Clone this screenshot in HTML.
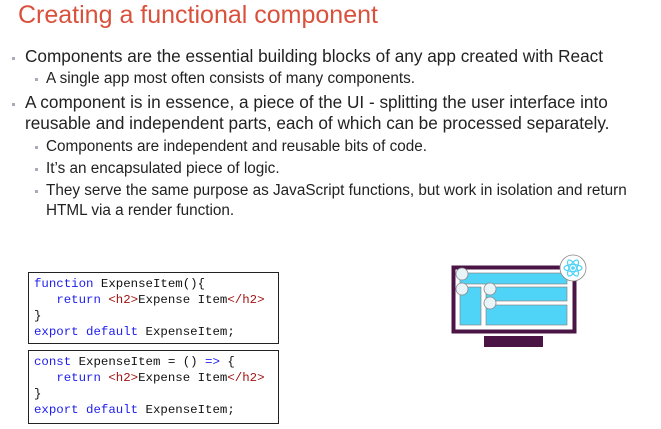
<!DOCTYPE html>
<html><head><style>
body{margin:0;width:661px;height:429px;background:#fff;position:relative;overflow:hidden;font-family:"Liberation Sans",Arial,sans-serif;color:#222}
.a{position:absolute;white-space:nowrap}
.t{left:18px;top:1px;font-size:25px;color:#d9513c}
.b1{font-size:17.2px;left:25px}
.b2{font-size:15.3px;left:46px}
.d1{position:absolute;left:12px;width:3px;height:3px;background:#aab}
.d2{position:absolute;left:35px;width:3px;height:3px;background:#aab}
.code{position:absolute;left:28px;width:251px;border:1px solid #222;font-family:"Liberation Mono",monospace;font-size:12.4px;line-height:16px;padding:3px 5px;box-sizing:border-box;color:#111}
.k{color:#2020ee}.r{color:#a31515}
</style></head><body>
<div class="a t">Creating a functional component</div>
<div class="d1" style="top:57px"></div><div class="a b1" style="top:46px">Components are the essential building blocks of any app created with React</div>
<div class="d2" style="top:78px"></div><div class="a b2" style="top:70px">A single app most often consists of many components.</div>
<div class="d1" style="top:103px"></div><div class="a b1" style="top:92px">A component is in essence, a piece of the UI - splitting the user interface into</div>
<div class="a b1" style="top:113px">reusable and independent parts, each of which can be processed separately.</div>
<div class="d2" style="top:146px"></div><div class="a b2" style="top:138px">Components are independent and reusable bits of code.</div>
<div class="d2" style="top:168px"></div><div class="a b2" style="top:160px">It’s an encapsulated piece of logic.</div>
<div class="d2" style="top:190px"></div><div class="a b2" style="top:182px">They serve the same purpose as JavaScript functions, but work in isolation and return</div>
<div class="a b2" style="top:202px">HTML via a render function.</div>
<div class="code" style="top:272px;height:72px"><span class="k">function</span> ExpenseItem(){<br>&nbsp;&nbsp;&nbsp;<span class="k">return</span> <span class="r">&lt;h2&gt;</span>Expense Item<span class="r">&lt;/h2&gt;</span><br>}<br><span class="k">export default</span> ExpenseItem;</div>
<div class="code" style="top:350px;height:74px"><span class="k">const</span> ExpenseItem = () <span class="k">=&gt;</span> {<br>&nbsp;&nbsp;&nbsp;<span class="k">return</span> <span class="r">&lt;h2&gt;</span>Expense Item<span class="r">&lt;/h2&gt;</span><br>}<br><span class="k">export default</span> ExpenseItem;</div>
<svg style="position:absolute;left:0;top:0" width="661" height="429">
<rect x="453.5" y="267.5" width="121" height="64" fill="#fff" stroke="#4a1545" stroke-width="4"/>
<rect x="484" y="336" width="59" height="11" fill="#4a1545"/>
<g fill="#4fd3f7" stroke="#888" stroke-width="0.7">
<rect x="460" y="273" width="107" height="11"/>
<rect x="460" y="287" width="21" height="38"/>
<rect x="486" y="287" width="81" height="14"/>
<rect x="486" y="305" width="81" height="20"/>
</g>
<g fill="#e8f4f8" stroke="#888" stroke-width="0.8">
<circle cx="462" cy="274" r="6"/><circle cx="462" cy="289" r="6"/><circle cx="490" cy="289" r="6"/><circle cx="490" cy="303" r="6"/>
<circle cx="573" cy="268" r="13" fill="#fff"/>
</g>
<g fill="none" stroke="#4fd3f7" stroke-width="1.2">
<ellipse cx="573" cy="268" rx="9" ry="3.5"/>
<ellipse cx="573" cy="268" rx="9" ry="3.5" transform="rotate(60 573 268)"/>
<ellipse cx="573" cy="268" rx="9" ry="3.5" transform="rotate(-60 573 268)"/>
</g>
<circle cx="573" cy="268" r="1.8" fill="#4fd3f7"/>
</svg>
</body></html>
